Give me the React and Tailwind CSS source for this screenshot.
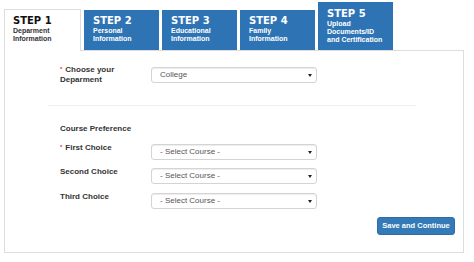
const tabs = [
  { step: "STEP 1", lines: ["Deparment", "Information"], active: true },
  { step: "STEP 2", lines: ["Personal", "Information"] },
  { step: "STEP 3", lines: ["Educational", "Information"] },
  { step: "STEP 4", lines: ["Family", "Information"] },
  { step: "STEP 5", lines: ["Upload", "Documents/ID", "and Certification"] },
];

function Tab({ tab }) {
  if (tab.active) {
    return (
      <div className="relative z-10 -mb-px h-[42px] w-[77px] border border-b-0 border-[#ddd] bg-white pl-[8px] pt-[5px]">
        <div className="font-['DejaVu_Sans',sans-serif] text-[10px] font-bold leading-[12px] text-[#111]">
          {tab.step}
        </div>
        {tab.lines.map((l) => (
          <div key={l} className="text-[7px] font-bold leading-[8px] text-[#333]">
            {l}
          </div>
        ))}
      </div>
    );
  }
  const tall = tab.lines.length > 2;
  return (
    <div
      className={`w-[75px] bg-[#2e74b5] pl-[9px] ${
        tall ? "h-[48px] pt-[6px]" : "h-[40px] pt-[5px]"
      }`}
    >
      <div className="font-['DejaVu_Sans',sans-serif] text-[10px] font-bold leading-[12px] text-white">
        {tab.step}
      </div>
      {tab.lines.map((l) => (
        <div key={l} className="text-[7px] font-bold leading-[8px] text-white">
          {l}
        </div>
      ))}
    </div>
  );
}

function Select({ value }) {
  return (
    <div className="flex h-[16px] w-[166px] items-center justify-between rounded-[3px] border border-[#d4d4d4] bg-white pl-[8px] pr-[4px] shadow-[inset_0_1px_1px_rgba(0,0,0,0.075)]">
      <span className="text-[8px] leading-none text-[#555]">{value}</span>
      <svg width="4" height="3" viewBox="0 0 4 3">
        <path d="M0 0h4L2 3z" fill="#222" />
      </svg>
    </div>
  );
}

function Star() {
  return (
    <span className="mr-[3px] align-top text-[6px] leading-[8px] text-[#e33]">*</span>
  );
}

function Row({ label, required, value, className = "" }) {
  return (
    <div className={`flex items-start ${className}`}>
      <div className="-mt-px w-[103px] pl-[12px] text-[8px] font-bold leading-[10px] text-[#333]">
        {required && <Star />}
        {label}
      </div>
      <Select value={value} />
    </div>
  );
}

export default function App() {
  return (
    <div className="h-[262px] w-[474px] bg-white pl-[4px] font-['Liberation_Sans',Arial,sans-serif]">
      <div className="flex h-[50px] items-end gap-[3px]">
        {tabs.map((t) => (
          <Tab key={t.step} tab={t} />
        ))}
      </div>

      <div className="w-[460px] border border-[#ddd]">
        <div className="ml-[43px] w-[368px] pt-[14px]">
          <div className="flex items-start">
            <div className="w-[103px] pl-[12px] text-[8px] font-bold leading-[10px] text-[#333]">
              <Star />Choose your
              <br />
              Deparment
            </div>
            <div className="mt-[2px]">
              <Select value="College" />
            </div>
          </div>

          <div className="mt-[20px] border-t border-[#eee]" />

          <div className="mt-[18px] pl-[12px] text-[8px] font-bold leading-[10px] text-[#333]">
            Course Preference
          </div>

          <Row className="mt-[10px]" label="First Choice" required value="- Select Course -" />
          <Row className="mt-[8px]" label="Second Choice" value="- Select Course -" />
          <Row className="mt-[9px]" label="Third Choice" value="- Select Course -" />
        </div>

        <div className="mt-[8px] flex justify-end pb-[17px] pr-[8px]">
          <button className="h-[18px] w-[78px] rounded-[3px] border border-[#2e6da4] bg-[#337ab7] text-[7.5px] font-bold text-white">
            Save and Continue
          </button>
        </div>
      </div>
    </div>
  );
}
